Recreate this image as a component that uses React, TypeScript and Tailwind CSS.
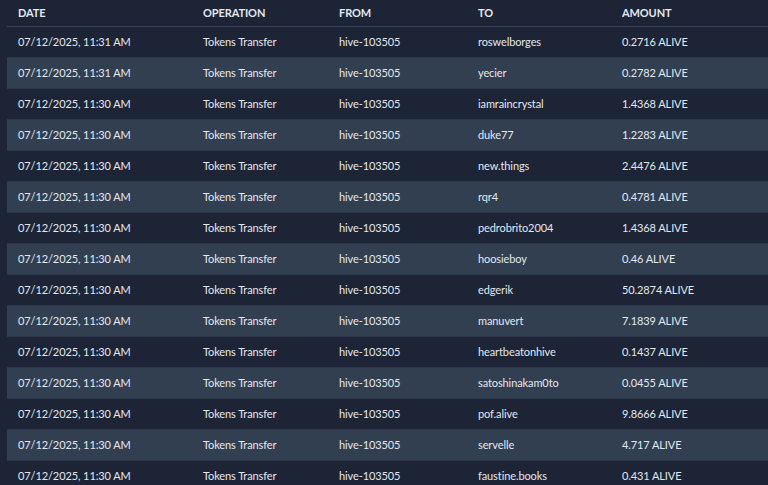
import React from 'react';

type Row = { date: string; to: string; amount: string };

const rows: Row[] = [
    { date: '07/12/2025, 11:31 AM', to: 'roswelborges', amount: '0.2716 ALIVE' },
    { date: '07/12/2025, 11:31 AM', to: 'yecier', amount: '0.2782 ALIVE' },
    { date: '07/12/2025, 11:30 AM', to: 'iamraincrystal', amount: '1.4368 ALIVE' },
    { date: '07/12/2025, 11:30 AM', to: 'duke77', amount: '1.2283 ALIVE' },
    { date: '07/12/2025, 11:30 AM', to: 'new.things', amount: '2.4476 ALIVE' },
    { date: '07/12/2025, 11:30 AM', to: 'rqr4', amount: '0.4781 ALIVE' },
    { date: '07/12/2025, 11:30 AM', to: 'pedrobrito2004', amount: '1.4368 ALIVE' },
    { date: '07/12/2025, 11:30 AM', to: 'hoosieboy', amount: '0.46 ALIVE' },
    { date: '07/12/2025, 11:30 AM', to: 'edgerik', amount: '50.2874 ALIVE' },
    { date: '07/12/2025, 11:30 AM', to: 'manuvert', amount: '7.1839 ALIVE' },
    { date: '07/12/2025, 11:30 AM', to: 'heartbeatonhive', amount: '0.1437 ALIVE' },
    { date: '07/12/2025, 11:30 AM', to: 'satoshinakam0to', amount: '0.0455 ALIVE' },
    { date: '07/12/2025, 11:30 AM', to: 'pof.alive', amount: '9.8666 ALIVE' },
    { date: '07/12/2025, 11:30 AM', to: 'servelle', amount: '4.717 ALIVE' },
    { date: '07/12/2025, 11:30 AM', to: 'faustine.books', amount: '0.431 ALIVE' },
];

export default function App() {
    return (
        <div className="h-[485px] overflow-hidden bg-[#1d2435] pl-[7px] text-[#e2e8f0] font-['Lato',sans-serif]">
            <div className="grid grid-cols-[196px_136px_139px_144px_1fr] text-[11px] tracking-[-0.1px]">
                <div className="col-span-5 grid grid-cols-subgrid h-[27px] items-center border-b border-[#384355] font-bold uppercase">
                    <div className="pl-[11px]">Date</div>
                    <div>Operation</div>
                    <div>From</div>
                    <div>To</div>
                    <div>Amount</div>
                </div>
                {rows.map((r, i) => (
                    <div
                        key={i}
                        className={`col-span-5 grid grid-cols-subgrid h-[31px] items-center border-b border-[#2d384a] ${i % 2 === 1 ? 'bg-[#323f51]' : ''}`}
                    >
                        <div className="pl-[11px]">{r.date}</div>
                        <div>Tokens Transfer</div>
                        <div>hive-103505</div>
                        <div>{r.to}</div>
                        <div>{r.amount}</div>
                    </div>
                ))}
            </div>
        </div>
    );
}
